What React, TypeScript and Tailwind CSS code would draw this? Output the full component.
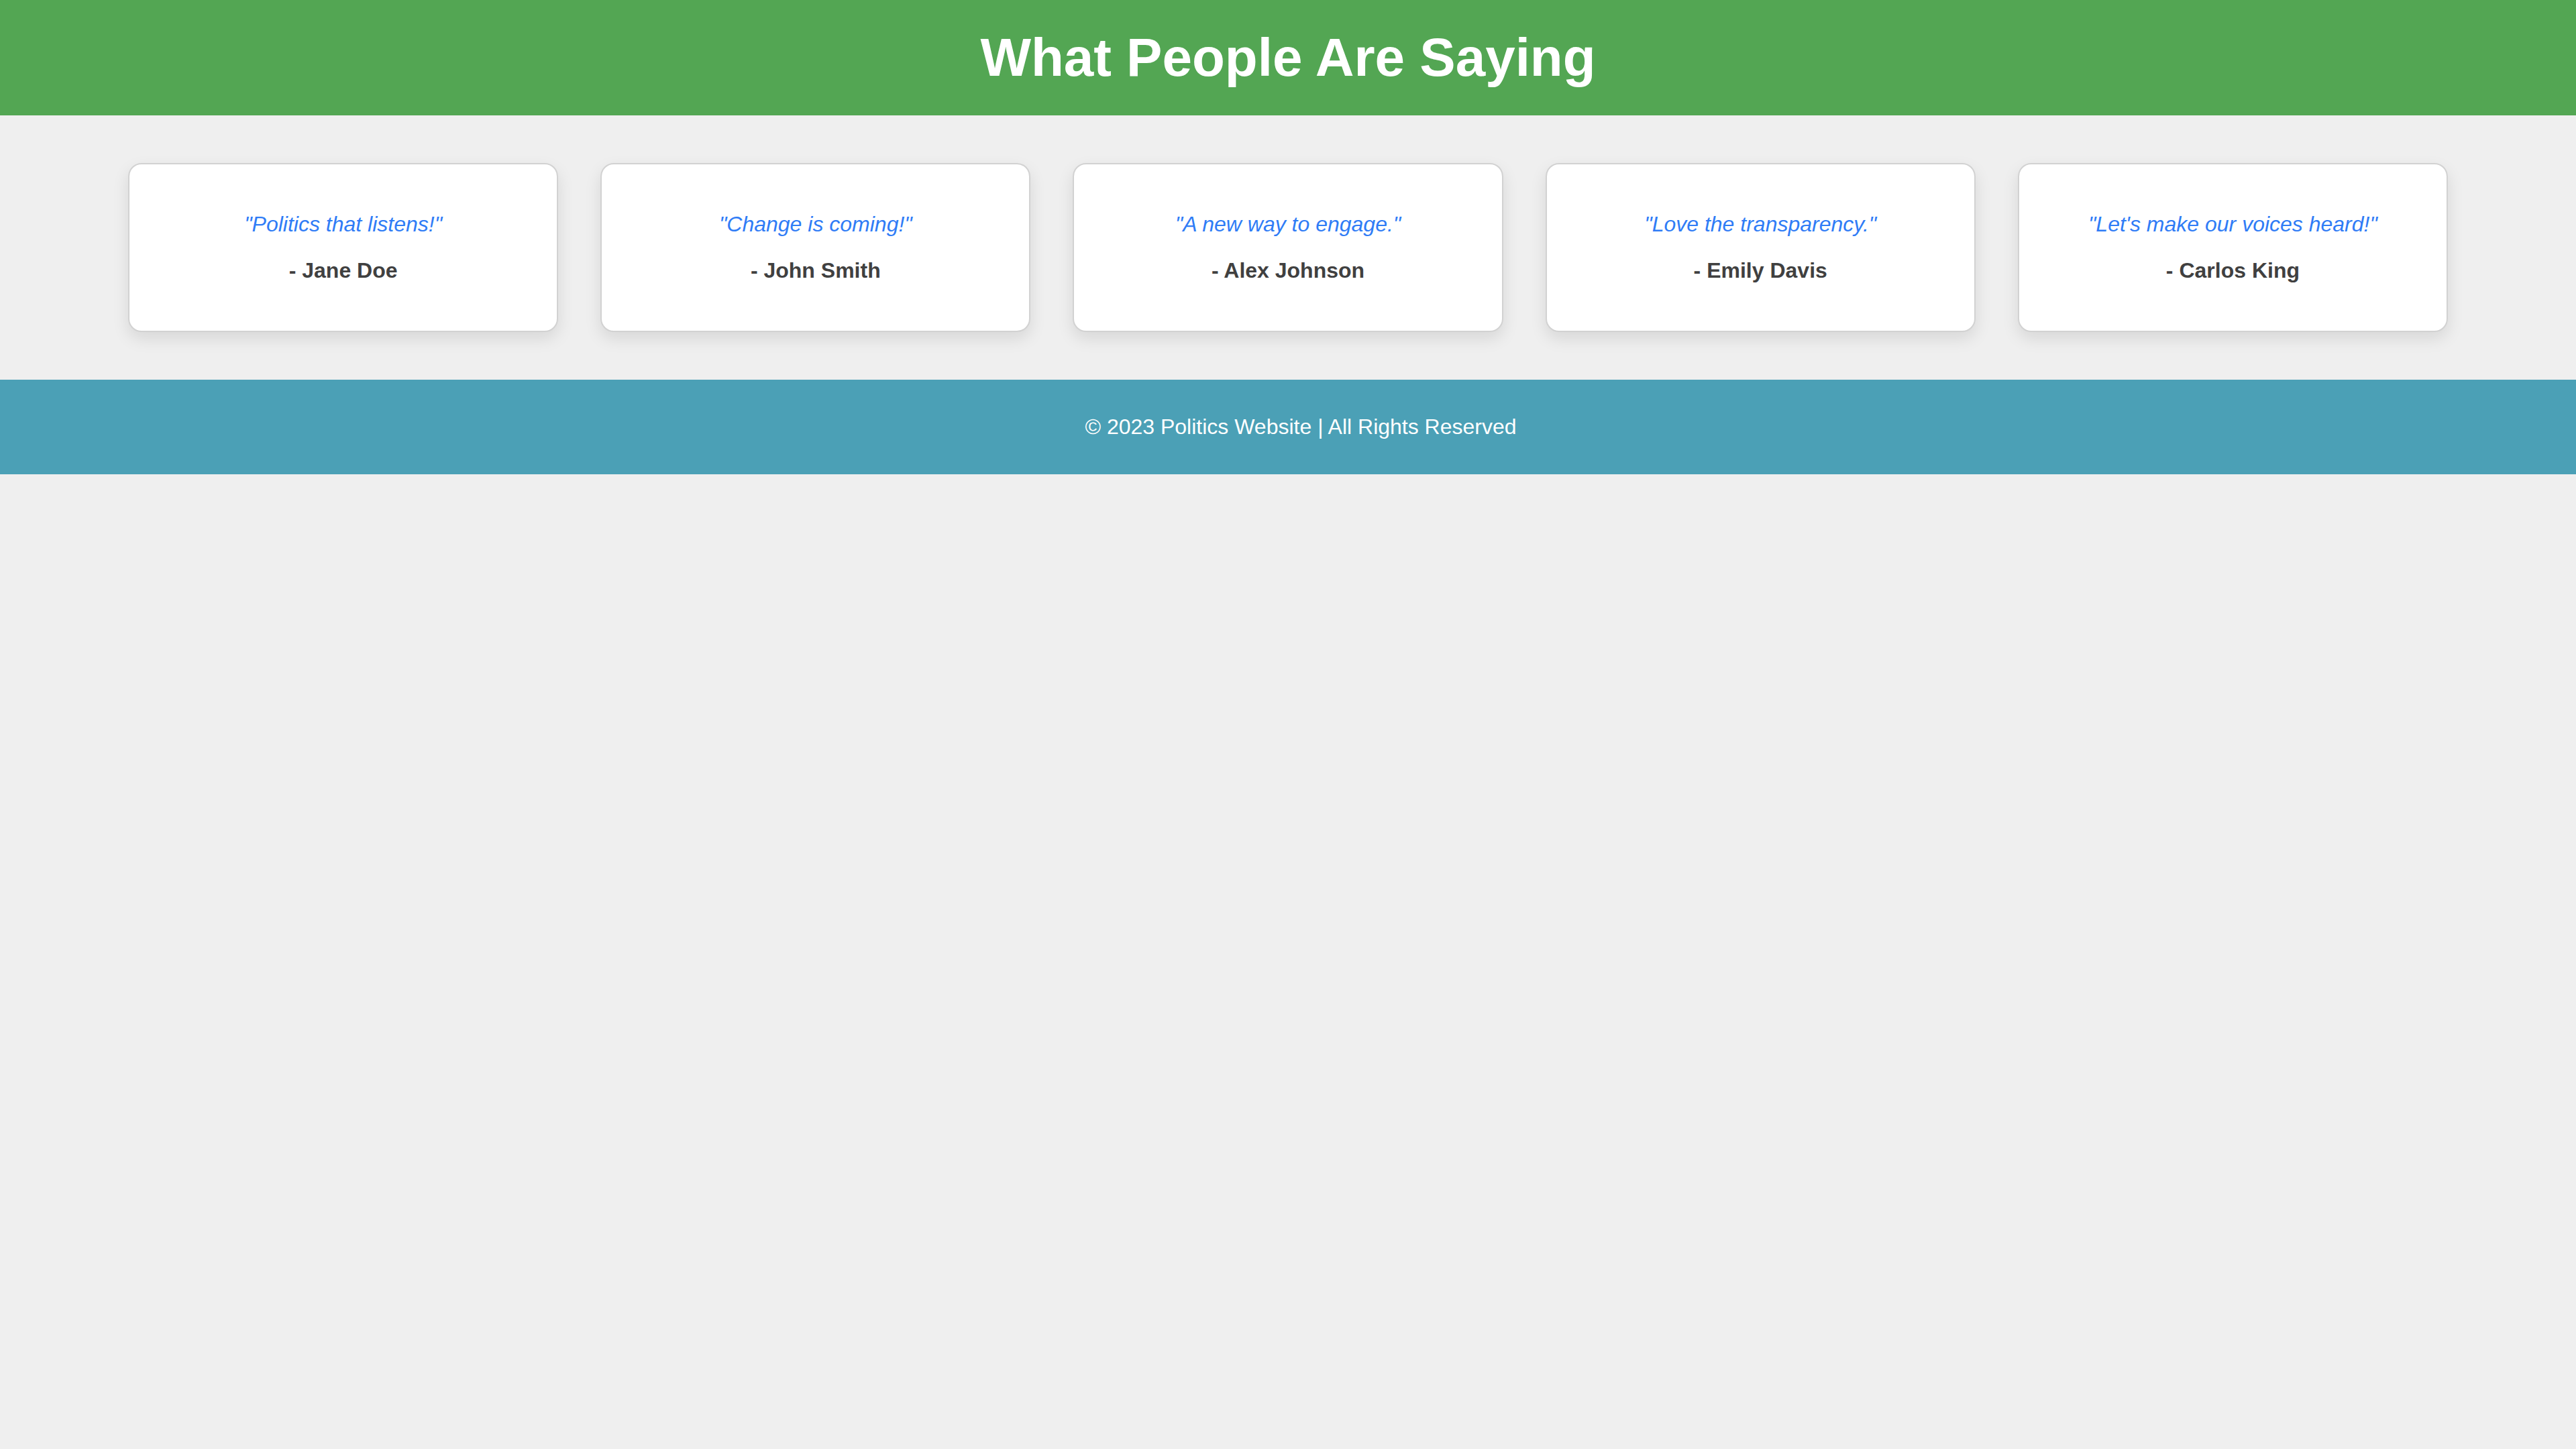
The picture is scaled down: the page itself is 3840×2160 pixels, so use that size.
const testimonials = [
    {quote: '"Politics that listens!"', name: '- Jane Doe'},
    {quote: '"Change is coming!"', name: '- John Smith'},
    {quote: '"A new way to engage."', name: '- Alex Johnson'},
    {quote: '"Love the transparency."', name: '- Emily Davis'},
    {quote: '"Let\'s make our voices heard!"', name: '- Carlos King'},
];

function App() {
    return (
        <div className="min-h-screen bg-[#efefef] font-['Liberation_Sans',Arial,sans-serif]">
            <header className="bg-[#53a653] py-[40px] text-center">
                <h1 className="m-0 text-[80px] leading-[92px] font-bold text-white">
                    What People Are Saying
                </h1>
            </header>

            <section className="flex gap-[63px] px-[191px] py-[71px]">
                {testimonials.map((item, index) => (
                    <div
                        key={index}
                        className="flex-1 bg-white border-2 border-[#d2d2d2] rounded-[20px] px-[40px] py-[39px] text-center shadow-[0_10px_24px_rgba(0,0,0,0.1)]"
                    >
                        <p className="my-[32px] text-[32px] leading-[37px] italic text-[#2f7cf6]">
                            {item.quote}
                        </p>
                        <p className="my-[32px] text-[32px] leading-[37px] font-bold text-[#404040]">
                            {item.name}
                        </p>
                    </div>
                ))}
            </section>

            <footer className="bg-[#4ba0b6] py-[52px] pl-[38px] text-center">
                <p className="m-0 text-[32px] leading-[37px] text-white">
                    © 2023 Politics Website | All Rights Reserved
                </p>
            </footer>
        </div>
    );
}

export default App;
